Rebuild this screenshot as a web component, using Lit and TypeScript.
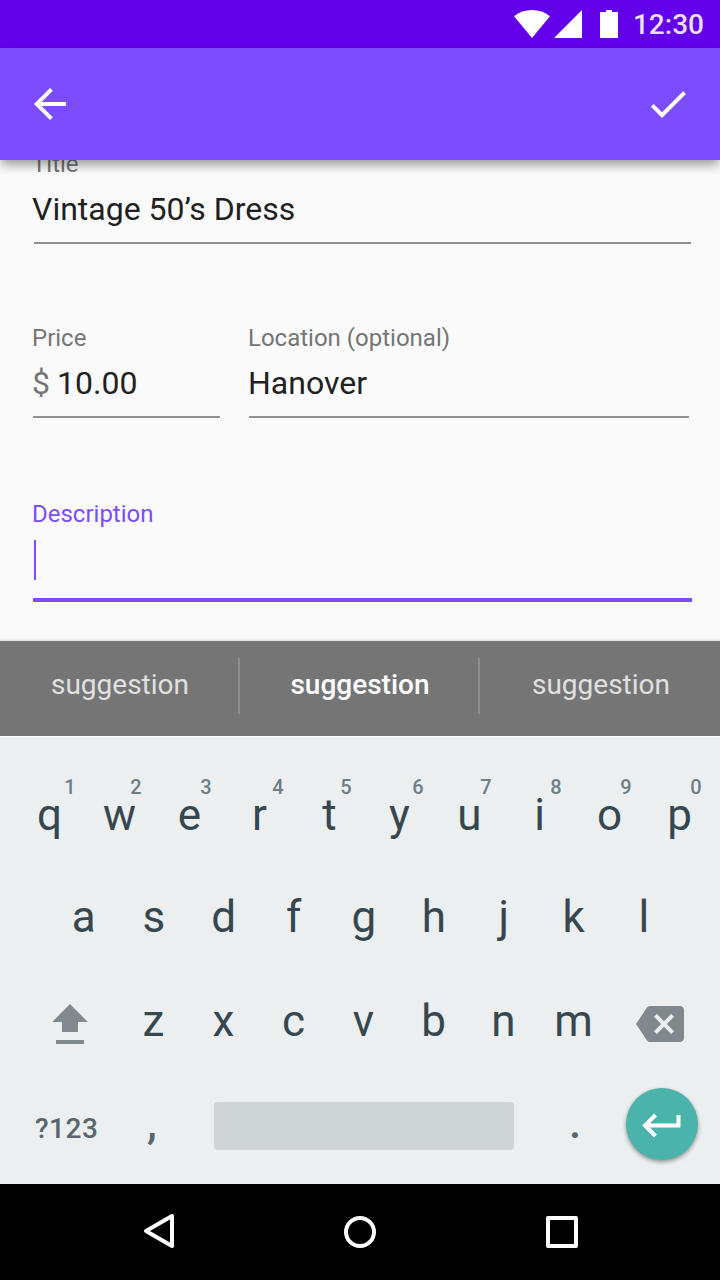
import { LitElement, html, css, svg } from "lit";
import { customElement, property } from "lit/decorators.js";
import { styleMap } from "lit/directives/style-map.js";

interface Key {
  label: string;
  hint?: string;
  /** Horizontal centre of the long-press hint inside the key, in px. */
  at?: number;
}

const TOP_ROW: Key[] = [
  { label: "q", hint: "1", at: 55.5 },
  { label: "w", hint: "2", at: 51.5 },
  { label: "e", hint: "3", at: 51.5 },
  { label: "r", hint: "4", at: 53.5 },
  { label: "t", hint: "5", at: 51.5 },
  { label: "y", hint: "6", at: 53.5 },
  { label: "u", hint: "7", at: 51.5 },
  { label: "i", hint: "8", at: 51.5 },
  { label: "o", hint: "9", at: 51.5 },
  { label: "p", hint: "0", at: 51.5 },
];
const HOME_ROW = [..."asdfghjkl"];
const BOTTOM_ROW = [..."zxcvbnm"];

@customElement("status-bar")
class StatusBar extends LitElement {
  static styles = css`
    :host {
      display: flex;
      justify-content: flex-end;
      align-items: center;
      box-sizing: border-box;
      height: 48px;
      padding-right: 16px;
      background: #6200ea;
      font-weight: 500;
      font-size: 28px;
      color: rgba(255, 255, 255, 0.88);
    }
    svg { display: block; fill: #fff; }
    .signal { margin-left: 4px; }
    .battery { margin-left: 18px; }
    .clock { margin-left: 15px; padding-top: 2px; line-height: 46px; }
  `;
  render() {
    return html`
      <svg width="36" height="28" viewBox="0 0 36 28"><path d="M0 6.2C5 2 11.2 0 18 0s13 2 18 6.2L18 28z" /></svg>
      <svg class="signal" width="28" height="28" viewBox="0 0 28 28"><path d="M28 0v28H0z" /></svg>
      <svg class="battery" width="18" height="28" viewBox="0 0 18 28"><path d="M6 0h6v2h6v26H0V2h6z" /></svg>
      <span class="clock">12:30</span>
    `;
  }
}

@customElement("app-bar")
class AppBar extends LitElement {
  static styles = css`
    :host {
      display: flex;
      justify-content: space-between;
      align-items: center;
      box-sizing: border-box;
      height: 112px;
      padding: 0 28px 0 26px;
      background: #7c4dff;
      position: relative;
      z-index: 1;
      box-shadow: 0 6px 10px -1px rgba(0, 0, 0, 0.38);
    }
    svg { display: block; fill: #fff; }
  `;
  render() {
    return html`
      <svg width="48" height="48" viewBox="0 0 24 24"><path d="M20 11H7.83l5.59-5.59L12 4l-8 8 8 8 1.41-1.41L7.83 13H20v-2z" /></svg>
      <svg width="48" height="48" viewBox="0 0 24 24"><path d="M9 16.17L4.83 12l-1.42 1.41L9 19 21 7l-1.41-1.41z" /></svg>
    `;
  }
}

@customElement("text-field")
class TextField extends LitElement {
  @property() label = "";
  @property() value = "";
  @property() prefixText = "";
  @property({ type: Boolean, reflect: true }) focused = false;

  static styles = css`
    :host {
      display: flex;
      flex-direction: column;
      box-sizing: border-box;
      height: 94px;
    }
    :host([focused]) { height: 102px; }
    .label {
      font-size: 24px;
      line-height: 28px;
      color: #757575;
      white-space: nowrap;
    }
    :host([focused]) .label { color: #7c4dff; }
    .value {
      display: flex;
      margin-top: 12px;
      font-size: 32px;
      line-height: 38px;
      color: #212121;
      white-space: nowrap;
    }
    .prefix { width: 25px; color: #757575; }
    .caret {
      width: 2px;
      height: 40px;
      margin: 12px 0 0 2px;
      background: #7c4dff;
    }
    .line {
      height: 2px;
      margin: auto 0 0 var(--line-inset, 0px);
      background: #919191;
    }
    :host([focused]) .line { height: 4px; background: #7c4dff; }
  `;
  render() {
    return html`
      <div class="label">${this.label}</div>
      ${this.focused
        ? html`<div class="caret"></div>`
        : html`<div class="value">
            ${this.prefixText ? html`<span class="prefix">${this.prefixText}</span>` : null}<span>${this.value}</span>
          </div>`}
      <div class="line"></div>
    `;
  }
}

@customElement("soft-keyboard")
class SoftKeyboard extends LitElement {
  static styles = css`
    :host {
      display: flex;
      flex-direction: column;
      box-sizing: border-box;
      height: 448px;
      padding-top: 27px;
      border-top: 1px solid #fff;
      background: #ebeff0;
      color: #37474f;
    }
    .row { display: flex; justify-content: center; height: 102px; }
    .row.top { padding-left: 9px; }
    .row.home { padding-left: 7.5px; }
    .row.bottom { margin-top: 2px; justify-content: flex-start; padding-left: 22px; }
    .key {
      position: relative;
      width: 70px;
      font-size: 44px;
      line-height: 102px;
      text-align: center;
    }
    .hint {
      position: absolute;
      top: 11px;
      width: 20px;
      margin-left: -10px;
      font-size: 20px;
      line-height: 24px;
      font-weight: 500;
      color: #6d7e86;
    }
    .icon { display: block; margin-top: 30px; fill: #80898d; }
    .shift { width: 96.5px; }
    .shift .icon { margin-left: 24px; }
    .erase { padding-left: 27.5px; }
    .actions { display: flex; height: 112px; color: #59666d; font-weight: 500; }
    .symbols {
      width: 97px;
      padding-left: 35px;
      font-size: 28px;
      line-height: 114px;
      letter-spacing: 0.5px;
    }
    .comma { width: 40px; font-size: 44px; line-height: 102px; text-align: center; }
    .space {
      width: 300px;
      height: 48px;
      margin: 30px 0 0 42px;
      border-radius: 4px;
      background: #cfd4d7;
    }
    .period { width: 40px; margin-left: 41px; font-size: 44px; line-height: 102px; text-align: center; }
    .enter {
      display: flex;
      align-items: center;
      justify-content: center;
      width: 72px;
      height: 72px;
      margin: 16px 0 0 31px;
      border-radius: 50%;
      background: #4ab4ab;
      box-shadow: 0 2px 4px rgba(0, 0, 0, 0.4);
    }
    .enter svg { fill: none; stroke: #fff; stroke-width: 4; }
  `;
  render() {
    return html`
      <div class="row top">
        ${TOP_ROW.map(
          (k) => html`<div class="key">${k.label}<span class="hint" style=${styleMap({ left: `${k.at}px` })}>${k.hint}</span></div>`
        )}
      </div>
      <div class="row home">${HOME_ROW.map((k) => html`<div class="key">${k}</div>`)}</div>
      <div class="row bottom">
        <div class="shift">
          <svg class="icon" width="48" height="48" viewBox="0 0 48 48"><path d="M24 4l17.8 18H32v10H16V22H6.2zM10 40h28v4H10z" /></svg>
        </div>
        ${BOTTOM_ROW.map((k) => html`<div class="key">${k}</div>`)}
        <div class="erase">
          <svg class="icon" width="48" height="48" viewBox="0 0 24 24"><path d="M22 3H7c-.69 0-1.23.35-1.59.88L0 12l5.41 8.11c.36.53.9.89 1.59.89h15c1.1 0 2-.9 2-2V5c0-1.1-.9-2-2-2zm-3 12.59L17.59 17 14 13.41 10.41 17 9 15.59 12.59 12 9 8.41 10.41 7 14 10.59 17.59 7 19 8.41 15.41 12 19 15.59z" /></svg>
        </div>
      </div>
      <div class="actions">
        <div class="symbols">?123</div>
        <div class="comma">,</div>
        <div class="space"></div>
        <div class="period">.</div>
        <div class="enter">
          <svg width="72" height="72" viewBox="0 0 72 72"><path d="M52.5 27v10.5H18.5M29.5 27L19 37.5 29.5 48" /></svg>
        </div>
      </div>
    `;
  }
}

@customElement("app-root")
class AppRoot extends LitElement {
  static styles = css`
    :host {
      display: flex;
      flex-direction: column;
      width: 720px;
      height: 1280px;
      overflow: hidden;
      background: #fafafa;
      font-family: Roboto, "Noto Sans", sans-serif;
    }
    .form {
      display: flex;
      flex-direction: column;
      box-sizing: border-box;
      height: 490px;
      padding: 0 28px 0 32px;
      margin-top: -10px;
      gap: 80px;
    }
    .pair { display: flex; gap: 28px; height: 94px; }
    .title { margin-right: 1px; --line-inset: 1.5px; }
    .price { width: 188px; --line-inset: 0.5px; }
    .place { width: 441px; --line-inset: 0.5px; }
    .about { margin-top: 2px; --line-inset: 0.5px; }
    .suggestions {
      display: grid;
      grid-template-columns: 240px 240px 240px;
      box-sizing: border-box;
      height: 96px;
      padding-top: 1px;
      background: #757575;
      font-size: 28px;
      line-height: 86px;
      text-align: center;
      color: #e0e0e0;
      border-top: 1px solid #e0e4e4;
      box-shadow: 0 -1px 2px rgba(0, 0, 0, 0.06);
    }
    .suggestion { display: flex; justify-content: center; }
    .word { flex: 1; padding-left: 2px; }
    .rule { width: 2px; height: 56px; margin-top: 16px; background: #8e8e8e; }
    .strong { font-weight: 500; color: #fff; }
    .nav {
      display: flex;
      align-items: center;
      height: 96px;
      padding-left: 134px;
      background: #000;
    }
    .nav svg { display: block; fill: none; stroke: #fff; stroke-width: 4; stroke-linejoin: round; }
    .home { margin: 0 154px 0 154px; }
    .recent { margin-left: -4px; }
  `;
  render() {
    return html`
      <status-bar></status-bar>
      <app-bar></app-bar>
      <div class="form">
        <text-field class="title" label="Title" value="Vintage 50’s Dress"></text-field>
        <div class="pair">
          <text-field class="price" label="Price" prefixText="$" value="10.00"></text-field>
          <text-field class="place" label="Location (optional)" value="Hanover"></text-field>
        </div>
        <text-field class="about" label="Description" focused></text-field>
      </div>
      <div class="suggestions">
        <div class="suggestion"><span class="word">suggestion</span><i class="rule"></i></div>
        <div class="suggestion strong"><span class="word">suggestion</span><i class="rule"></i></div>
        <div class="suggestion"><span class="word">suggestion</span></div>
      </div>
      <soft-keyboard></soft-keyboard>
      <div class="nav">
        <svg width="48" height="48" viewBox="0 0 48 48">${svg`<path d="M38 8v30L12 23z" />`}</svg>
        <svg class="home" width="48" height="48" viewBox="0 0 48 48">${svg`<circle cx="24" cy="24" r="14" />`}</svg>
        <svg class="recent" width="48" height="48" viewBox="0 0 48 48">${svg`<path d="M14 10h28v28H14z" />`}</svg>
      </div>
    `;
  }
}
